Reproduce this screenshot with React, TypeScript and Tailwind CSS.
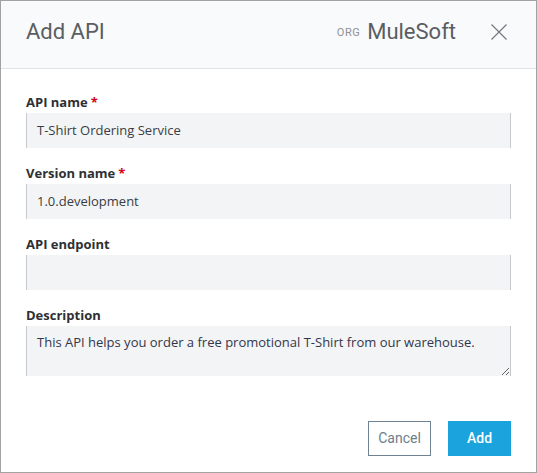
type Field = {
  label: string;
  value: string;
  required?: boolean;
};

const FIELDS: Field[] = [
  { label: "API name", value: "T-Shirt Ordering Service", required: true },
  { label: "Version name", value: "1.0.development", required: true },
  { label: "API endpoint", value: "" },
];

const din = { fontFamily: "Roboto, 'Liberation Sans', sans-serif" };
const sans = { fontFamily: "'Open Sans', 'Noto Sans', sans-serif" };

function Label({ text, required }: { text: string; required?: boolean }) {
  return (
    <label className="mb-[2px] block h-[18px] text-[13px] font-bold leading-[18px] text-[#2e3033]">
      {text}
      {required && <span className="ml-[3px] text-[#d0021b]">*</span>}
    </label>
  );
}

export default function App() {
  return (
    <div className="h-[473px] w-[537px] bg-white">
      <div className="flex h-full w-full flex-col border border-[#a2a2a2]" style={sans}>
        {/* Header */}
        <header
          className="flex h-[68px] shrink-0 items-center justify-between border-b border-[#e1e3e5] bg-[#f9fafb] pb-[6px] pl-[25px] pr-[29px]"
          style={din}
        >
          <h1 className="text-[22px] font-normal text-[#5a5e62]">Add API</h1>
          <div className="flex items-center">
            <span className="mr-[7px] mt-[3px] text-[11px] tracking-[0.5px] text-[#8e9195]">ORG</span>
            <span className="text-[22px] text-[#5a5e62]">MuleSoft</span>
            <svg
              className="ml-[35px]"
              width="16"
              height="16"
              viewBox="0 0 16 16"
              fill="none"
              stroke="#74787c"
              strokeWidth="1.2"
            >
              <path d="M0.5 0.5 L15.5 15.5 M15.5 0.5 L0.5 15.5" />
            </svg>
          </div>
        </header>

        {/* Form */}
        <div className="flex flex-1 flex-col px-[25px] pt-[24px]">
          {FIELDS.map((f) => (
            <div key={f.label} className="mb-[16px]">
              <Label text={f.label} required={f.required} />
              <div className="flex h-[35px] items-center border-x border-[#c8c9cc] bg-[#f3f4f6] pl-[10px] text-[13px] text-[#3a3d42]">
                {f.value}
              </div>
            </div>
          ))}

          <div>
            <Label text="Description" />
            <textarea
              className="block h-[50px] w-full resize-y border-x border-[#c8c9cc] bg-[#f3f4f6] px-[10px] py-[6px] text-[13px] leading-[20px] text-[#33364a] outline-none"
              style={sans}
              defaultValue="This API helps you order a free promotional T-Shirt from our warehouse."
            />
          </div>

          {/* Footer */}
          <div className="mt-[45px] flex justify-end gap-[17px]">
            <button
              className="h-[35px] w-[63px] border border-[#6f8291] bg-white text-[14px] text-[#6b7d8b]"
              style={din}
            >
              Cancel
            </button>
            <button
              className="h-[35px] w-[63px] bg-[#1ba3dd] text-[14px] font-medium text-white"
              style={din}
            >
              Add
            </button>
          </div>
        </div>
      </div>
    </div>
  );
}
